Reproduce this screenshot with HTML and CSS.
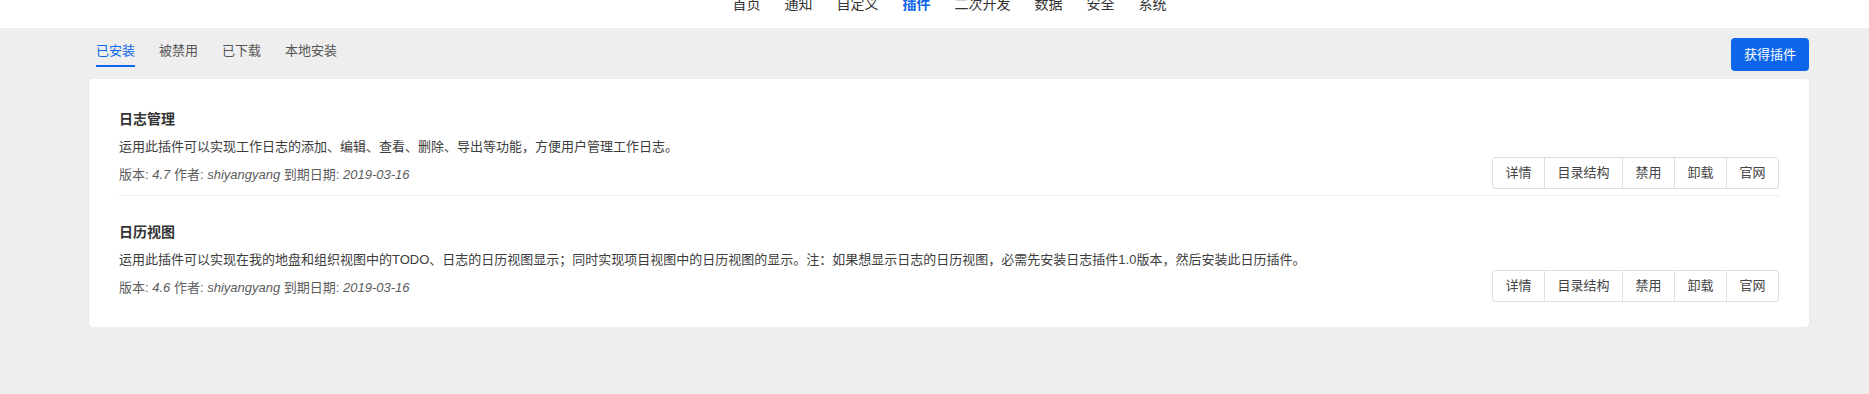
FILE: index.html
```html
<!doctype html>
<html>
<head>
	<meta charset="utf-8">
	<title>插件</title>
	<link rel="stylesheet" href="styles.css">
</head>
<body>
	<div class="header">
		<ul class="nav">
			<li>首页</li>
			<li>通知</li>
			<li>自定义</li>
			<li class="active">插件</li>
			<li>二次开发</li>
			<li>数据</li>
			<li>安全</li>
			<li>系统</li>
		</ul>
	</div>

	<div class="main">
		<div class="toolbar">
			<ul class="tabs">
				<li class="active">已安装</li>
				<li>被禁用</li>
				<li>已下载</li>
				<li>本地安装</li>
			</ul>
			<a class="btn-primary" href="javascript:;">获得插件</a>
		</div>

		<div class="card">
			<div class="plugin">
				<div class="plugin-info">
					<h3>日志管理</h3>
					<p class="desc">运用此插件可以实现工作日志的添加、编辑、查看、删除、导出等功能，方便用户管理工作日志。</p>
					<p class="meta">版本: <em>4.7</em> 作者: <em>shiyangyang</em> 到期日期: <em>2019-03-16</em></p>
				</div>
				<div class="btn-group">
					<a href="javascript:;">详情</a>
					<a href="javascript:;">目录结构</a>
					<a href="javascript:;">禁用</a>
					<a href="javascript:;">卸载</a>
					<a href="javascript:;">官网</a>
				</div>
			</div>
			<div class="plugin">
				<div class="plugin-info">
					<h3>日历视图</h3>
					<p class="desc">运用此插件可以实现在我的地盘和组织视图中的TODO、日志的日历视图显示；同时实现项目视图中的日历视图的显示。注：如果想显示日志的日历视图，必需先安装日志插件1.0版本，然后安装此日历插件。</p>
					<p class="meta">版本: <em>4.6</em> 作者: <em>shiyangyang</em> 到期日期: <em>2019-03-16</em></p>
				</div>
				<div class="btn-group">
					<a href="javascript:;">详情</a>
					<a href="javascript:;">目录结构</a>
					<a href="javascript:;">禁用</a>
					<a href="javascript:;">卸载</a>
					<a href="javascript:;">官网</a>
				</div>
			</div>
		</div>
	</div>
</body>
</html>
```

FILE: styles.css
```css
*{
	margin:0;
	padding:0;
}
ul{
	list-style:none;
}
a{
	text-decoration:none;
}
body{
	background:#eee;
	font-family:"Liberation Sans","Noto Sans CJK SC",sans-serif;
	color:#333;
}
.header{
	height:28px;
	overflow:hidden;
	background:#fff;
	padding-left:30px;
}
.nav{
	display:flex;
	justify-content:center;
	gap:24px;
	margin-top:-3px;
	font-size:14px;
	line-height:14px;
	color:#333;
}
.nav .active{
	color:#0d66ea;
	font-weight:bold;
}
.main{
	padding:0 60px 0 89px;
}
.toolbar{
	display:flex;
	justify-content:space-between;
	align-items:flex-start;
	padding-top:10px;
	margin-bottom:8px;
}
.tabs{
	display:flex;
	gap:24px;
	padding-left:7px;
	font-size:13px;
}
.tabs li{
	padding:3px 0 4px;
	line-height:20px;
	color:#555;
	border-bottom:2px solid transparent;
}
.tabs .active{
	color:#0d66ea;
	border-bottom-color:#0d66ea;
}
.btn-primary{
	display:block;
	height:33px;
	line-height:33px;
	padding:0 13px;
	background:#0d66ea;
	border-radius:4px;
	color:#fff;
	font-size:13px;
}
.card{
	background:#fff;
	border-radius:4px;
	box-shadow:0 1px 2px rgba(0,0,0,.08);
	padding:4px 30px 19px;
}
.plugin{
	display:flex;
	align-items:flex-end;
	padding:22px 0 6px;
	border-bottom:1px solid #eee;
}
.plugin:last-child{
	border-bottom:none;
}
.plugin-info{
	flex:1;
}
.plugin h3{
	font-size:14px;
	line-height:28px;
	color:#333;
}
.desc,.meta{
	font-size:13px;
	line-height:28px;
}
.desc{
	color:#3d3d3d;
}
.meta{
	color:#5c5c5c;
}
.meta em{
	font-style:italic;
}
.btn-group{
	display:flex;
	padding-left:1px;
}
.btn-group a{
	display:block;
	height:30px;
	line-height:30px;
	padding:0 12.5px;
	margin-left:-1px;
	border:1px solid #dcdfe6;
	font-size:13px;
	color:#444;
}
.btn-group a:first-child{
	border-radius:3px 0 0 3px;
}
.btn-group a:last-child{
	border-radius:0 3px 3px 0;
}
```
